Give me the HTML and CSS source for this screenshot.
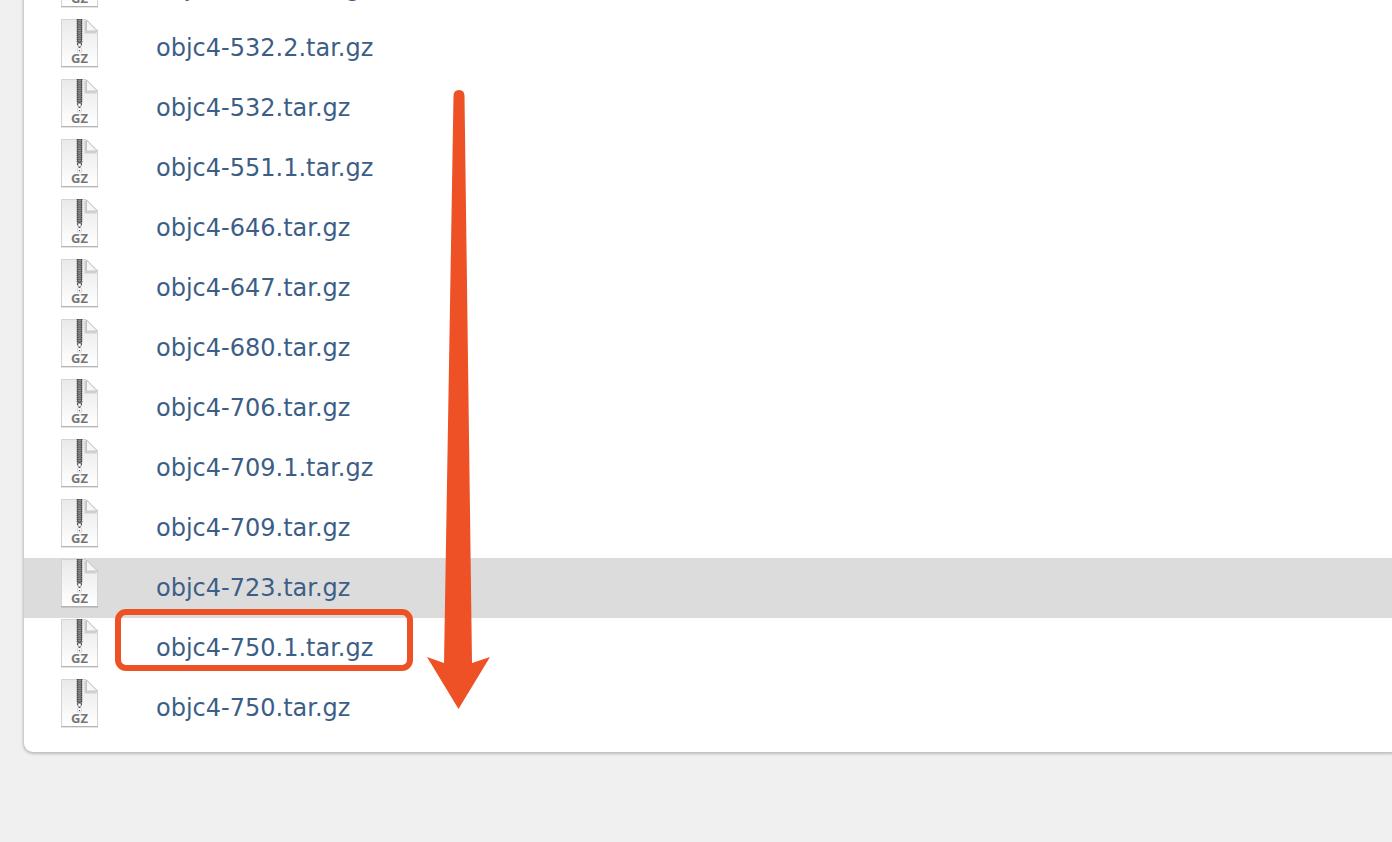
FILE: index.html
```html
<!DOCTYPE html>
<html lang="en">
<head>
<meta charset="utf-8">
<title>objc4 source archives</title>
<link rel="stylesheet" href="styles.css">
</head>
<body>
<svg class="defs" aria-hidden="true">
  <defs>
    <linearGradient id="paper" x1="0" y1="0" x2="0" y2="1">
      <stop offset="0" stop-color="#e9e9e9"/><stop offset="1" stop-color="#ffffff"/>
    </linearGradient>
    <linearGradient id="fold" x1="0" y1="1" x2="1" y2="0">
      <stop offset="0" stop-color="#ffffff"/><stop offset="0.5" stop-color="#f2f2f2"/><stop offset="1" stop-color="#cccccc"/>
    </linearGradient>
    <symbol id="gz" viewBox="0 0 38 50">
      <path d="M.5 1.5H25L36.500 13V48.500H.5Z" fill="url(#paper)" stroke="#d4d4d4"/>
      <path d="M0 48.500H37" stroke="#b4b4b4"/>
      <path d="M0 49.500H37" stroke="#000" stroke-opacity=".1"/>
      <path d="M24.500 3v11.500h11" fill="none" stroke="#b0b0b0" stroke-width="2" stroke-opacity=".5"/>
      <path d="M25.500 2V13H36.500Z" fill="url(#fold)" stroke="#b8b8b8" stroke-width=".8"/>
      <rect x="16" y="1" width="5" height="24" fill="#8d8d8d"/>
      <path d="M16.500 1v24M20.500 1v24" stroke="#444" stroke-width="1.500" stroke-dasharray="1.500 .5"/>
      <path d="M18.500 1v24" stroke="#606060" stroke-width="2" stroke-dasharray="1 1.500"/>
      <path d="M16 24h5v3l-1.500 3h-2L16 27Z" fill="#a0a0a0"/>
      <circle cx="18.500" cy="27" r="1.200" fill="#fff"/>
      <path d="M17 24.500h3M18 29.500h1M18 32.500h1M16.500 25v2M20.500 25v2" stroke="#555"/>
      <path d="M16.500 30v4h4v-4" fill="none" stroke="#dcdcdc"/>
      <text x="18.500" y="45" text-anchor="middle" class="kind">GZ</text>
    </symbol>
  </defs>
</svg>
<main class="panel">
  <table class="files">
    <tbody>
      <tr><td class="icon"><svg><use href="#gz"/></svg></td><td class="name"><a href="#">objc4-493.9.tar.gz</a></td></tr>
      <tr><td class="icon"><svg><use href="#gz"/></svg></td><td class="name"><a href="#">objc4-532.2.tar.gz</a></td></tr>
      <tr><td class="icon"><svg><use href="#gz"/></svg></td><td class="name"><a href="#">objc4-532.tar.gz</a></td></tr>
      <tr><td class="icon"><svg><use href="#gz"/></svg></td><td class="name"><a href="#">objc4-551.1.tar.gz</a></td></tr>
      <tr><td class="icon"><svg><use href="#gz"/></svg></td><td class="name"><a href="#">objc4-646.tar.gz</a></td></tr>
      <tr><td class="icon"><svg><use href="#gz"/></svg></td><td class="name"><a href="#">objc4-647.tar.gz</a></td></tr>
      <tr><td class="icon"><svg><use href="#gz"/></svg></td><td class="name"><a href="#">objc4-680.tar.gz</a></td></tr>
      <tr><td class="icon"><svg><use href="#gz"/></svg></td><td class="name"><a href="#">objc4-706.tar.gz</a></td></tr>
      <tr><td class="icon"><svg><use href="#gz"/></svg></td><td class="name"><a href="#">objc4-709.1.tar.gz</a></td></tr>
      <tr><td class="icon"><svg><use href="#gz"/></svg></td><td class="name"><a href="#">objc4-709.tar.gz</a></td></tr>
      <tr class="current"><td class="icon"><svg><use href="#gz"/></svg></td><td class="name"><a href="#">objc4-723.tar.gz</a></td></tr>
      <tr><td class="icon"><svg><use href="#gz"/></svg></td><td class="name marked"><a href="#">objc4-750.1.tar.gz</a></td></tr>
      <tr><td class="icon"><svg><use href="#gz"/></svg></td><td class="name"><a href="#">objc4-750.tar.gz</a></td></tr>
    </tbody>
  </table>
  <svg class="arrow" viewBox="0 0 64 620" aria-hidden="true">
    <path d="M26.500 7Q26.500 1 32 1T37.500 7L45 574L63 568L31.500 620L0 568L17 574Z" fill="#ee5126"/>
  </svg>
</main>
</body>
</html>
```
FILE: styles.css
```css
*,
*::after {
  box-sizing: border-box;
}

body {
  margin: 0;
  height: 100vh;
  padding: 0 0 90px 24px;
  display: flex;
  flex-direction: column;
  justify-content: flex-end;
  overflow: hidden;
  background: #f0f0f0;
  font-family: "Lucida Grande", "DejaVu Sans", sans-serif;
}

.defs {
  position: absolute;
  width: 0;
  height: 0;
}

.panel {
  position: relative;
  flex: none;
  padding-bottom: 14px;
  background: #fff;
  border-radius: 0 0 0 9px;
  box-shadow: 0 1px 3px 1px rgba(0, 0, 0, 0.22);
}

.files {
  width: 100%;
  border-collapse: collapse;
}

.files tr {
  height: 60px;
}

.files td {
  padding: 0;
}

.current {
  background: #dcdcdc;
}

.files .icon {
  width: 132px;
  padding-left: 37px;
  vertical-align: top;
}

.icon svg {
  display: block;
  width: 38px;
  height: 50px;
}

.kind {
  font: bold 13px "Noto Sans", sans-serif;
  fill: #777;
}

.name {
  font-size: 24px;
  line-height: 60px;
}

.name a {
  color: #3c5e86;
  text-decoration: none;
}

.marked {
  position: relative;
}

.marked::after {
  content: "";
  position: absolute;
  left: -41px;
  top: -9px;
  width: 298px;
  height: 62px;
  border: 6px solid #ee5126;
  border-radius: 11px;
  pointer-events: none;
}

.arrow {
  position: absolute;
  left: 403px;
  bottom: 43px;
  width: 64px;
  height: 620px;
}
```
